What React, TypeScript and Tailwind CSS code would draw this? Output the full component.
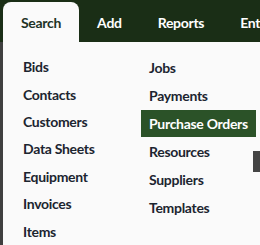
const tabs = ["Search", "Add", "Reports", "Entry"];

const leftItems = ["Bids", "Contacts", "Customers", "Data Sheets", "Equipment", "Invoices", "Items"];
const rightItems = ["Jobs", "Payments", "Purchase Orders", "Resources", "Suppliers", "Templates"];

function MenuItem({ label, active }: { label: string; active?: boolean }) {
  return (
    <div className="h-[28px] flex items-center">
      <span
        className={`h-[27px] px-[8px] flex items-center whitespace-nowrap ${
          active ? "bg-[#2b5228] text-white" : "text-[#1c2530]"
        }`}
      >
        {label}
      </span>
    </div>
  );
}

export default function App() {
  return (
    <div
      className="w-[260px] h-[245px] overflow-hidden bg-[#3f3f3f] relative font-bold text-[14px] tracking-[-0.3px]"
      style={{ fontFamily: "Lato, 'Noto Sans', sans-serif" }}
    >
      <div className="h-[42px] bg-[#1a2e16] flex items-end pl-[3px] whitespace-nowrap overflow-hidden">
        {tabs.map((t, i) => (
          <div
            key={t}
            className={`h-[40px] px-[18px] shrink-0 flex items-center ${
              i === 0 ? "bg-[#fafafa] rounded-t-[8px] text-[#1e3326]" : "text-white"
            }`}
          >
            {t}
          </div>
        ))}
      </div>
      <div className="ml-[3px] h-[203px] bg-[#fafafa] flex pt-[11px] pl-[12px]">
        <div className="w-[126px] shrink-0 flex flex-col">
          {leftItems.map((l) => (
            <MenuItem key={l} label={l} />
          ))}
        </div>
        <div className="flex flex-col">
          {rightItems.map((l) => (
            <MenuItem key={l} label={l} active={l === "Purchase Orders"} />
          ))}
        </div>
      </div>
      <div className="absolute right-0 top-[151px] w-[7px] h-[21px] bg-[#444444]" />
    </div>
  );
}
